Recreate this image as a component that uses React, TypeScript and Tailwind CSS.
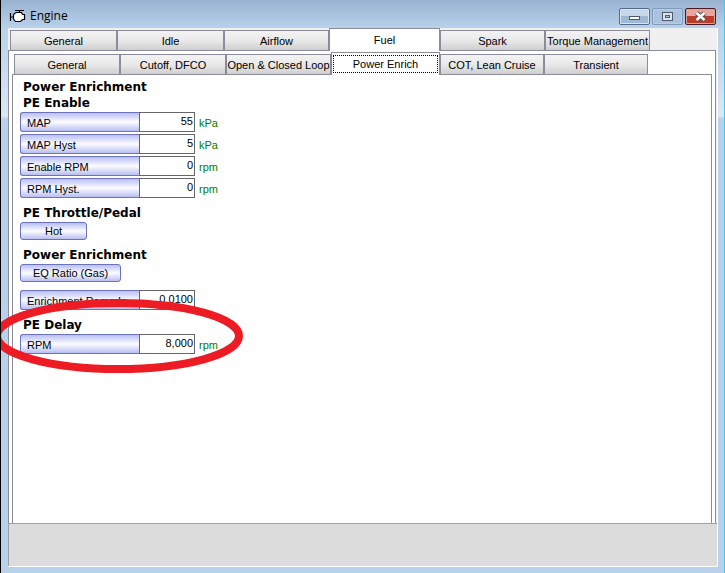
import { useState } from "react";

type TabSpec = { name: string; width: string };

const mainTabs: TabSpec[] = [
  { name: "General", width: "w-[107px]" },
  { name: "Idle", width: "w-[107px]" },
  { name: "Airflow", width: "w-[105px]" },
  { name: "Fuel", width: "w-[111px]" },
  { name: "Spark", width: "w-[105px]" },
  { name: "Torque Management", width: "w-[105px]" },
];

const fuelTabs: TabSpec[] = [
  { name: "General", width: "w-[106px]" },
  { name: "Cutoff, DFCO", width: "w-[106px]" },
  { name: "Open & Closed Loop", width: "w-[105px]" },
  { name: "Power Enrich", width: "w-[109px]" },
  { name: "COT, Lean Cruise", width: "w-[104px]" },
  { name: "Transient", width: "w-[104px]" },
];

function TabRow({ tabs, initial, label, focused }: { tabs: TabSpec[]; initial: string; label: string; focused?: boolean }) {
  const [active, setActive] = useState(initial);
  return (
    <div role="tablist" aria-label={label} className="relative z-10 -mb-px flex items-end pl-0.5">
      {tabs.map((tab) => {
        const on = tab.name === active;
        return (
          <button
            key={tab.name}
            role="tab"
            aria-selected={on}
            onClick={() => setActive(tab.name)}
            className={`${tab.width} flex shrink-0 justify-center whitespace-nowrap border border-[#8a8c99] text-[11px] leading-4 ${
              on ? "h-[23px] border-b-0 bg-white px-px pt-0.5 pb-0.5" : "h-[21px] bg-linear-to-b from-[#f3f3f3] via-[#e9e9e9] to-[#cfcfcf] p-px"
            }`}
          >
            <span className={`flex h-full w-full items-center justify-center ${on && focused ? "border border-dotted border-black" : ""}`}>
              {tab.name}
            </span>
          </button>
        );
      })}
    </div>
  );
}

const blueFace = "border border-[#6b74bb] bg-linear-to-b from-[#b9bff0] via-[#fcfcff] to-[#b9bff0] text-[11px] leading-4";

function Heading({ children }: { children: string }) {
  return <h2 className="pl-[3px] font-['DejaVu_Sans',Verdana,sans-serif] text-[12px] leading-4 font-bold">{children}</h2>;
}

function Field({ id, label, value, unit }: { id: string; label: string; value: string; unit?: string }) {
  return (
    <div className="flex h-5 items-stretch">
      <label htmlFor={id} className={`${blueFace} w-[119px] rounded-l-[3px] border-r-0 pt-0.5 pl-1.5`}>
        {label}
      </label>
      <input
        id={id}
        defaultValue={value}
        className="w-14 border border-[#666] bg-white pr-px pb-0.5 text-right text-[11px] leading-4 outline-none"
      />
      {unit && <span className="pt-0.5 pl-1 text-[11px] leading-[18px] text-[#008000]">{unit}</span>}
    </div>
  );
}

function CaptionButtons() {
  const base = "flex h-[17px] w-[31px] items-center justify-center rounded-[2px] border";
  return (
    <div className="flex gap-0.5 self-start pt-2">
      <button aria-label="Minimize" className={`${base} border-[#536b87] bg-linear-to-b from-[#c5d7e9] from-45% to-[#9eb9d3] to-50% shadow-[inset_0_0_0_1px_#d8e5f2]`}>
        <svg width="13" height="13" viewBox="0 0 13 13" shapeRendering="crispEdges">
          <path d="M1.5 6.5h10v3h-10z" fill="#fff" stroke="#505a68" />
        </svg>
      </button>
      <button aria-label="Maximize" className={`${base} border-[#8199b8] bg-[#a9c2de] shadow-[inset_0_0_0_1px_#b9cee5]`}>
        <svg width="11" height="11" viewBox="0 0 11 11" shapeRendering="crispEdges">
          <path d="M.5 1.5h10v8h-10z" fill="#dbe3ea" stroke="#505a68" />
          <path d="M3.5 4.5h4v2h-4z" fill="#a9c2de" stroke="#505a68" />
        </svg>
      </button>
      <button aria-label="Close" className={`${base} border-[#4c1a24] bg-linear-to-b from-[#e7a69b] from-45% to-[#bb3d29] to-50% shadow-[inset_0_0_0_1px_#e0a397]`}>
        <svg width="13" height="11" viewBox="0 0 13 11">
          <path d="M2.5 2l8 7M10.5 2l-8 7" stroke="#505a68" strokeWidth="4.6" />
          <path d="M2.5 2l8 7M10.5 2l-8 7" stroke="#fff" strokeWidth="2.4" />
        </svg>
      </button>
    </div>
  );
}

export default function App() {
  return (
    <div className="relative flex min-h-screen flex-col overflow-hidden border-r border-l border-r-[#35cdec] border-l-black bg-[linear-gradient(#98b2d0,#b9d1ea_28px,#dbe7f5_116px,#b9d1ea_119px)] pr-1.5 pb-1.5 pl-[7px] font-['Liberation_Sans',Arial,sans-serif] text-black">
      <header className="flex h-7 items-center justify-between pr-0.5">
        <div className="flex items-center gap-[3px] pt-1">
          <svg width="18" height="15" viewBox="0 0 18 15" className="ml-px" fill="none" stroke="#000">
            <path d="M5.5 4.5l2-1h5l1 2h2v5h-2l-2 2h-5l-2-2.5v-4z" fill="#fff" strokeWidth="1.2" />
            <path d="M6 1.5h9M10.5 1.5v2M1.5 4v8M1.5 8h3" strokeWidth="1.2" />
          </svg>
          <h1 className="font-['Open_Sans','Noto_Sans',sans-serif] text-[12px] leading-4">Engine</h1>
        </div>
        <CaptionButtons />
      </header>

      <main className="flex flex-1 flex-col border-r border-b border-white bg-[#f0f0f0]">
        <TabRow tabs={mainTabs} initial="Fuel" label="Engine sections" />
        <section className="mr-px flex flex-1 flex-col border border-b-0 border-[#8a8c99] bg-white px-[3px] pt-px">
          <TabRow tabs={fuelTabs} initial="Power Enrich" label="Fuel sections" focused />
          <form className="flex flex-1 flex-col items-start border border-b-0 border-[#8a8c99] bg-white px-[7px] pt-1" onSubmit={(e) => e.preventDefault()}>
            <Heading>Power Enrichment</Heading>
            <Heading>PE Enable</Heading>
            <div className="mt-px mb-[7px] flex flex-col gap-0.5">
              <Field id="map" label="MAP" value="55" unit="kPa" />
              <Field id="map-hyst" label="MAP Hyst" value="5" unit="kPa" />
              <Field id="enable-rpm" label="Enable RPM" value="0" unit="rpm" />
              <Field id="rpm-hyst" label="RPM Hyst." value="0" unit="rpm" />
            </div>
            <Heading>PE Throttle/Pedal</Heading>
            <button type="button" className={`${blueFace} mt-px mb-[7px] h-[18px] w-[67px] rounded-[3px]`}>Hot</button>
            <Heading>Power Enrichment</Heading>
            <button type="button" className={`${blueFace} mt-px mb-[7px] h-[18px] w-[101px] rounded-[3px]`}>EQ Ratio (Gas)</button>
            <div className="mt-px mb-[7px]">
              <Field id="ramp-in" label="Enrichment Ramp In" value="0.0100" />
            </div>
            <Heading>PE Delay</Heading>
            <div className="mt-px">
              <Field id="delay-rpm" label="RPM" value="8,000" unit="rpm" />
            </div>
          </form>
        </section>
        <footer className="h-[43px] border-t border-l border-[#a0a0a0] bg-[#dcdcdc]" />
      </main>

      <svg className="pointer-events-none absolute top-[296px] -left-2.5 z-20" width="260" height="80" viewBox="-9 296 260 80" aria-hidden="true">
        <ellipse cx="118" cy="336" rx="121" ry="33" fill="none" stroke="#ed1c24" strokeWidth="8" />
      </svg>
    </div>
  );
}
